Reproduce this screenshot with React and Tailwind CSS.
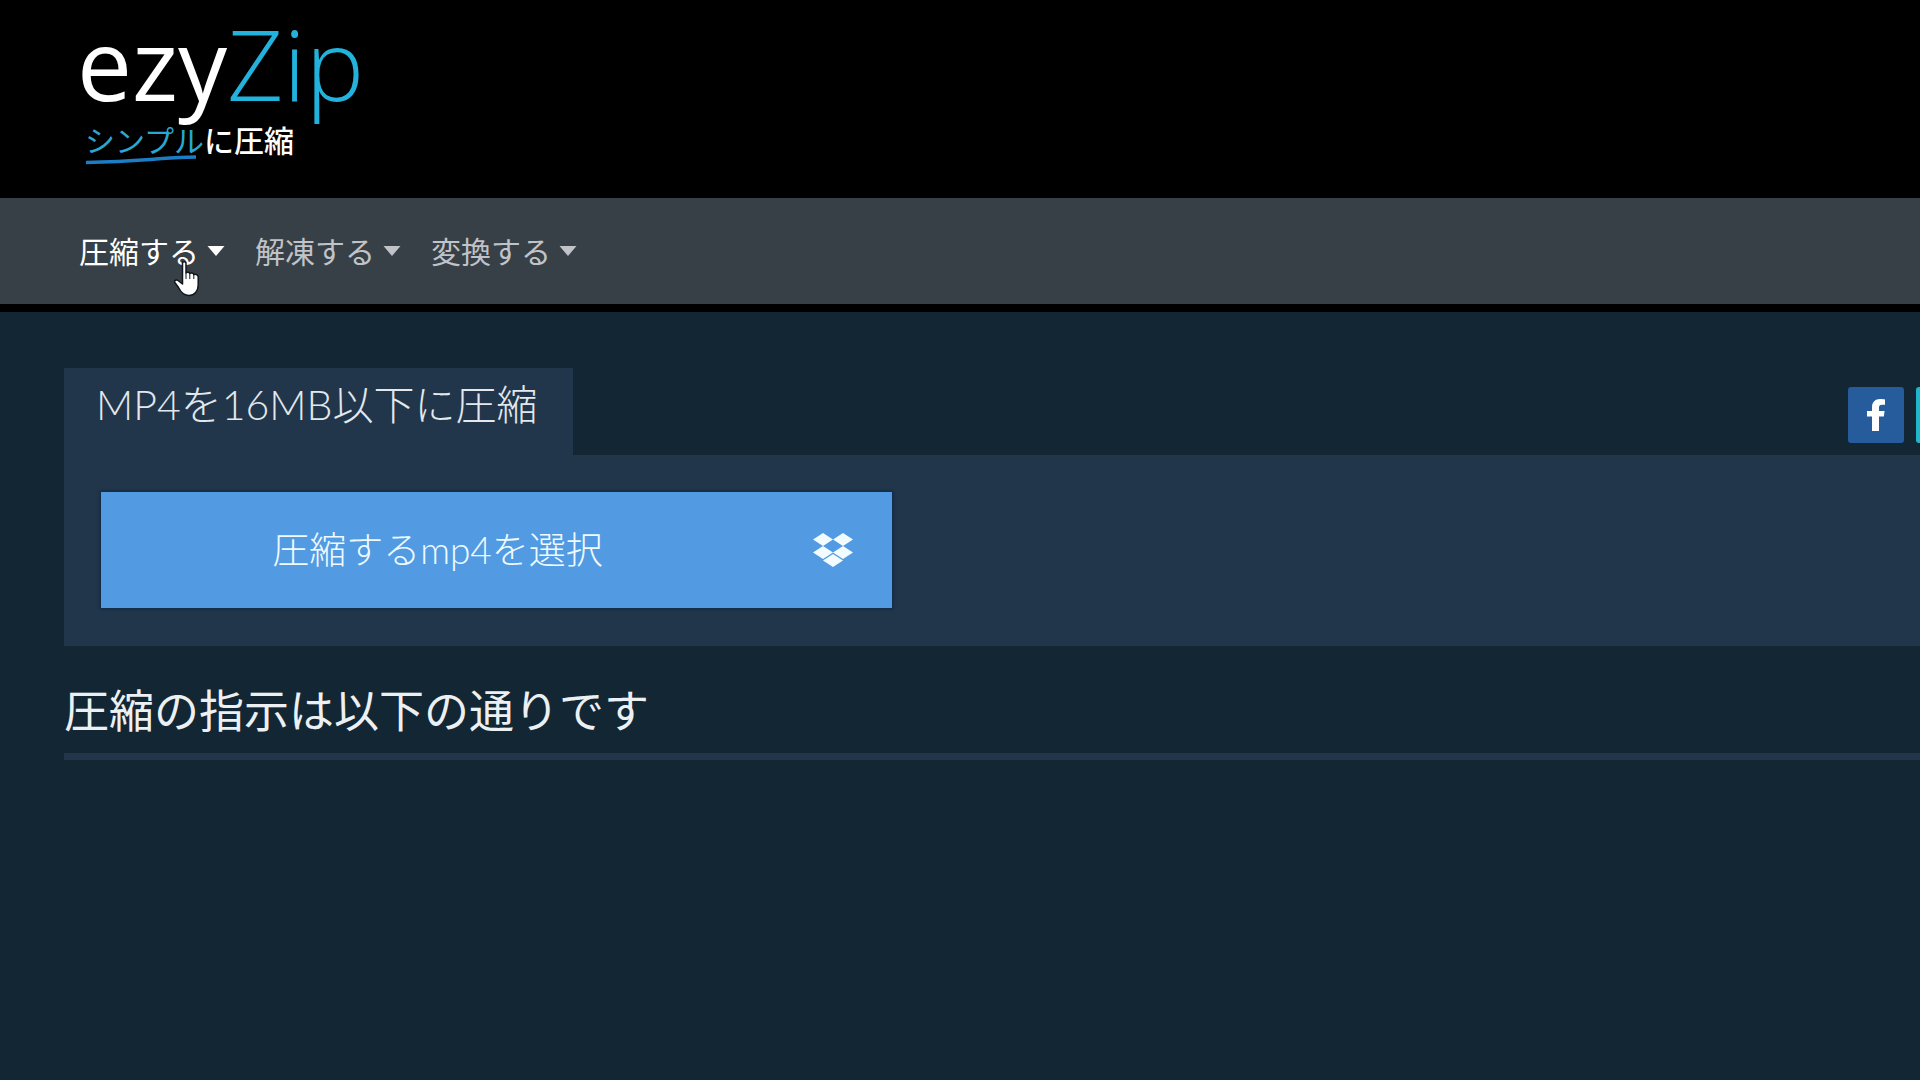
import React from "react";

const menus = [
  { label: "圧縮する", active: true },
  { label: "解凍する", active: false },
  { label: "変換する", active: false },
];

function Logo() {
  return (
    <a href="#" aria-label="ezyZip" className="flex w-fit flex-col">
      <span className="font-['Open_Sans',sans-serif] text-[98px] leading-[126px] text-white">
        ezy<span className="font-light text-[#22b2dc]">Zip</span>
      </span>
      <span className="relative -mt-1 ml-2 text-[30px] leading-9 font-medium text-white">
        <span className="font-normal text-[#2ba6d3]">シンプル</span>に圧縮
        <svg className="absolute top-8 left-0 h-3 w-28" viewBox="0 0 112 12" fill="none" aria-hidden="true">
          <path d="M1 8.5C30 8 45 7 65 5.5S95 3 111 3" stroke="#1c7cc4" strokeWidth="3.5" />
        </svg>
      </span>
    </a>
  );
}

function HandCursor() {
  return (
    <svg className="pointer-events-none absolute top-7 left-[94px] h-[38px] w-7" viewBox="0 0 28 38" aria-hidden="true">
      <path
        d="M9.5 4C9.5 2.2 13 2.2 13 4V14C13.5 12.8 16.5 13 16.8 14.6C17.5 13.6 20.4 13.8 20.8 15.6C22 14.9 25.2 15.4 25.2 18V26C25.2 32 21.5 36.5 16 36.5C10.5 36.5 7.5 32.5 5.5 28.5L1.8 23.5C.8 21.5 3.3 20.2 5 21.5L9.5 25Z"
        fill="#fff"
        stroke="#10161c"
        strokeWidth="1.5"
        strokeLinejoin="round"
      />
      <path d="M13 14V20M16.8 14.6V20M20.8 15.6V20" stroke="#10161c" strokeWidth="1" />
    </svg>
  );
}

function DropboxIcon() {
  return (
    <svg className="h-9 w-10" viewBox="0 0 40 36" fill="#f2fcff" aria-hidden="true">
      <path d="M10 1L20 7.5L10 14L0 7.5ZM30 1L40 7.5L30 14L20 7.5ZM10 14L20 20.5L10 27L0 20.5ZM30 14L40 20.5L30 27L20 20.5ZM20 22L30 28.5L20 35L10 28.5Z" />
    </svg>
  );
}

export default function App() {
  return (
    <div className="min-h-screen overflow-hidden bg-[#132634] font-['Lato','Noto_Sans_CJK_JP',sans-serif]" lang="ja">
      <header className="h-[198px] bg-black pl-[77px]">
        <Logo />
      </header>

      <nav className="flex h-[114px] items-center gap-[30px] border-b-8 border-black bg-[#374047] pl-[79px]">
        {menus.map((m) => (
          <div key={m.label} className="relative">
            <button
              type="button"
              className={`flex items-center gap-2 text-[30px] leading-10 ${m.active ? "text-white" : "text-[#c0c3c8]"}`}
            >
              {m.label}
              <svg className="h-[10px] w-[18px]" viewBox="0 0 17 10" fill="currentColor" aria-hidden="true">
                <path d="M0 0H17L8.5 10Z" />
              </svg>
            </button>
            {m.active && <HandCursor />}
          </div>
        ))}
      </nav>

      <main className="pt-14 pl-16">
        <div className="flex items-end justify-between">
          <h1 className="h-[87px] bg-[#21364b] pt-1 pr-9 pl-8 text-[41px] leading-[66px] font-light text-[#e3e8ec]">
            MP4を16MB以下に圧縮
          </h1>
          <div className="mb-3 flex w-[72px] gap-3 overflow-hidden">
            <a href="#" aria-label="Facebook" className="flex size-14 shrink-0 items-center justify-center rounded-[3px] bg-[#265c9b]">
              <svg className="h-8 w-[18px]" viewBox="0 0 18 32" fill="#fff" aria-hidden="true">
                <path d="M5 32V17.5H0V12H5V8.5C5 3 8.2 0 13 0C15.2 0 17.3 .3 18 .4V5.7H15C12.6 5.7 12 6.9 12 8.6V12H17.6L16.8 17.5H12V32Z" />
              </svg>
            </a>
            <a href="#" aria-label="Twitter" className="size-14 shrink-0 rounded-[3px] bg-[#1fb5cb]" />
          </div>
        </div>

        <section className="bg-[#21364b] px-[37px] pt-[37px] pb-[38px]">
          <div className="flex h-[116px] w-[791px] bg-[#529be2] text-[#eefaff] shadow-[0_0_3px_1px_#0c2844]">
            <button type="button" className="flex-1 text-[37px] leading-[50px] font-light">
              圧縮するmp4を選択
            </button>
            <button type="button" aria-label="Dropbox" className="flex w-[118px] items-center justify-center">
              <DropboxIcon />
            </button>
          </div>
        </section>

        <h2 className="border-b-[7px] border-[#21364b] pt-9 pb-3 text-[45px] leading-[59px] text-[#edf0f2]">
          圧縮の指示は以下の通りです
        </h2>
      </main>
    </div>
  );
}
